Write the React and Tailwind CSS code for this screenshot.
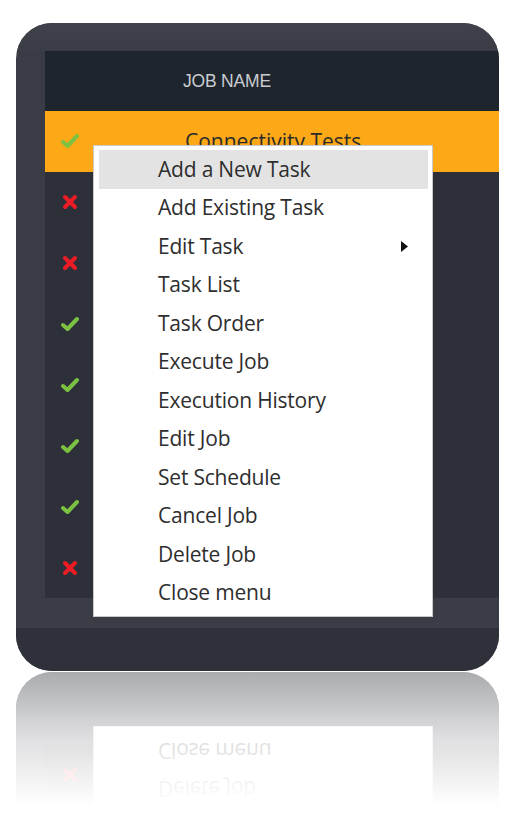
import React from "react";

const rows = ["ok", "x", "x", "ok", "ok", "ok", "ok", "x"];
const items = [
  "Add a New Task",
  "Add Existing Task",
  "Edit Task",
  "Task List",
  "Task Order",
  "Execute Job",
  "Execution History",
  "Edit Job",
  "Set Schedule",
  "Cancel Job",
  "Delete Job",
  "Close menu",
];

function Check() {
  return (
    <svg width="18" height="16" viewBox="0 0 18 16">
      <polyline points="2,9 6.5,13 16,3" fill="none" stroke="#7cc242" strokeWidth="4" strokeLinecap="round" strokeLinejoin="round" />
    </svg>
  );
}

function Cross() {
  return (
    <svg width="16" height="16" viewBox="0 0 16 16">
      <path d="M3 3 L13 13 M13 3 L3 13" fill="none" stroke="#ec1c24" strokeWidth="4" strokeLinecap="round" />
    </svg>
  );
}

function Device({ reflect = false }) {
  return (
    <div className="relative w-[483px] h-[648px] rounded-[36px] overflow-hidden bg-[#393c45] flex flex-col">
      <div className="h-[28px] bg-gradient-to-b from-[#3f424b] to-[#3a3d46]" />
      <div className="flex">
        <div className="w-[29px]" />
        <div className="flex-1 flex flex-col">
          <div className="h-[60px] bg-[#1f252d] flex items-center pl-[138px]">
            {!reflect && (
              <span className="text-[17.5px] text-[#c8ccd1] tracking-[-0.2px] font-['Liberation_Sans',sans-serif]">JOB NAME</span>
            )}
          </div>
          {rows.map((r, i) => (
            <div
              key={i}
              className={`h-[60.9px] flex items-center ${i === 0 ? "bg-[#fca817]" : "bg-[#2d3038]"}`}
            >
              <div className="w-[50px] flex justify-center">{r === "ok" ? <Check /> : <Cross />}</div>
              {i === 0 && !reflect && (
                <span className="ml-[90px] text-[21px] text-[#2b2b2b] font-['Open_Sans',sans-serif]">Connectivity Tests</span>
              )}
            </div>
          ))}
        </div>
      </div>
      <div className="h-[30px] bg-[#3a3d46]" />
      <div className="flex-1 bg-[#2e3139]" />

      <div className="absolute left-[77px] top-[122px] w-[340px] h-[472px] bg-white border border-[#c9c9c9] pt-[4px] pl-[5px] pr-[4px] font-['Open_Sans',sans-serif]">
        {items.map((t, i) => (
          <div
            key={t}
            className={`h-[38.5px] flex items-center pl-[59px] pr-[20px] text-[21px] text-[#2e2e2e] ${i === 0 ? "bg-[#e3e3e3]" : ""}`}
          >
            <span className="flex-1 tracking-[-0.2px]">{!reflect || i >= 10 ? t : ""}</span>
            {t === "Edit Task" && (
              <svg width="7" height="11" viewBox="0 0 7 11">
                <polygon points="0,0 7,5.5 0,11" fill="#111" />
              </svg>
            )}
          </div>
        ))}
      </div>
    </div>
  );
}

export default function App() {
  return (
    <div className="w-[526px] h-[819px] bg-white overflow-hidden">
      <div className="pl-[16px] pt-[23px]">
        <Device />
      </div>
      <div className="relative ml-[16px] mt-[1px] w-[483px] h-[134px] overflow-hidden">
        <div className="-scale-y-100 opacity-40">
          <Device reflect />
        </div>
        <div className="absolute inset-0 bg-gradient-to-b from-white/0 via-white/60 to-white" />
      </div>
    </div>
  );
}
